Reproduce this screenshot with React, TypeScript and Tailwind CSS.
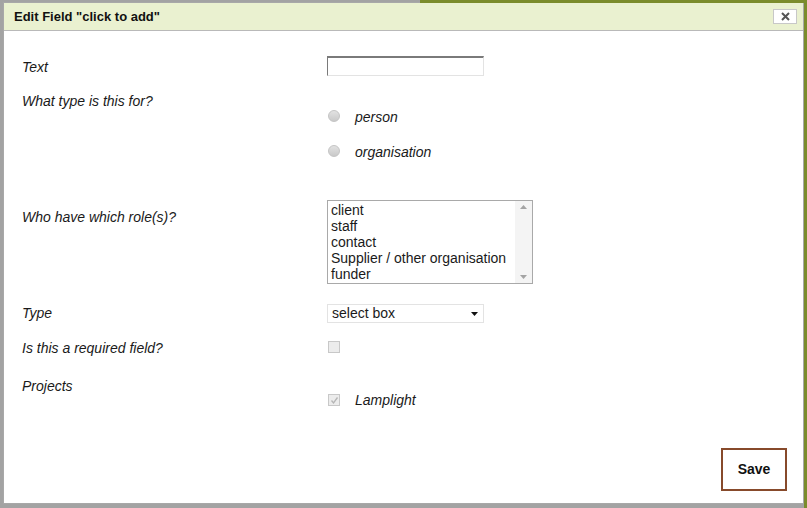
import React from "react";

const roles = ["client", "staff", "contact", "Supplier / other organisation", "funder"];

const Radio = () => (
  <span className="inline-block w-[12px] h-[12px] rounded-full border border-[#c4c4c4] bg-gradient-to-b from-[#e2e2e2] to-[#c9c9c9]" />
);

const Check = ({ checked }: { checked?: boolean }) => (
  <span className="flex items-center justify-center w-[12px] h-[12px] border border-[#c8c8c8] bg-[#ececec]">
    {checked && (
      <svg width="9" height="9" viewBox="0 0 9 9">
        <path d="M1.5 4.5 L3.5 7 L7.5 1.5" fill="none" stroke="#b5b5b5" strokeWidth="1.3" />
      </svg>
    )}
  </span>
);

export default function App() {
  return (
    <div
      className="relative w-[807px] h-[508px] bg-[#a3a3a3] overflow-hidden"
      style={{ fontFamily: '"Liberation Sans", Arial, sans-serif' }}
    >
      {/* page peeking behind the dialog */}
      <div className="absolute top-0 left-[420px] right-0 h-[3px] bg-[#7b8c2c]" />
      <div className="absolute top-0 right-0 bottom-0 w-[3px] bg-[#7b8c2c]" />

      <div className="pt-[2px] pl-[3px]">
        <div className="w-[801px] h-[502px] bg-white border border-[#a8a8a8] flex flex-col">
          {/* title bar */}
          <div className="h-[28px] shrink-0 bg-[#eaf1d0] border-b border-[#b9b9b9] flex items-center justify-between pl-[10px] pr-[6px]">
            <span className="text-[13px] font-bold text-[#111]">Edit Field "click to add"</span>
            <button className="w-[24px] h-[15px] bg-white border border-[#c8c8c8] flex items-center justify-center">
              <svg width="9" height="9" viewBox="0 0 9 9">
                <path d="M1 1 L8 8 M8 1 L1 8" stroke="#555" strokeWidth="2" />
              </svg>
            </button>
          </div>

          {/* form */}
          <div className="flex-1 flex flex-col pl-[18px] pt-[25px] text-[14px] text-[#1a1a1a]">
            <div className="flex h-[24px]">
              <div className="w-[305px] italic leading-[22px]">Text</div>
              <input className="w-[157px] h-[20px] border border-[#e3e3e3] border-t-[2px] border-t-[#7a7a7a] border-l-[#7a7a7a] outline-none" />
            </div>

            <div className="flex mt-[10px] h-[110px]">
              <div className="w-[305px] italic leading-[22px]">What type is this for?</div>
              <div className="flex flex-col pt-[18px] gap-[17px]">
                <label className="flex items-center h-[18px]">
                  <span className="ml-[1px] w-[27px]"><Radio /></span>
                  <span className="italic">person</span>
                </label>
                <label className="flex items-center h-[18px]">
                  <span className="ml-[1px] w-[27px]"><Radio /></span>
                  <span className="italic">organisation</span>
                </label>
              </div>
            </div>

            <div className="flex h-[104px]">
              <div className="w-[305px] italic leading-[22px] pt-[6px]">Who have which role(s)?</div>
              <div className="w-[206px] h-[84px] border border-[#a9a9a9] flex">
                <div className="flex-1 pl-[3px] pt-[1px] leading-[16px]">
                  {roles.map((r) => (
                    <div key={r}>{r}</div>
                  ))}
                </div>
                <div className="w-[17px] bg-[#f4f4f4] flex flex-col items-center justify-between py-[4px]">
                  <svg width="7" height="4" viewBox="0 0 7 4"><path d="M0 4 L3.5 0 L7 4Z" fill="#a3a3a3" /></svg>
                  <svg width="7" height="4" viewBox="0 0 7 4"><path d="M0 0 L3.5 4 L7 0Z" fill="#a3a3a3" /></svg>
                </div>
              </div>
            </div>

            <div className="flex h-[33px]">
              <div className="w-[305px] italic leading-[18px]">Type</div>
              <div className="w-[157px] h-[19px] border border-[#e3e3e3] flex items-center justify-between pl-[4px] pr-[5px]">
                <span>select box</span>
                <svg width="7" height="4" viewBox="0 0 7 4"><path d="M0 0 L3.5 4 L7 0Z" fill="#111" /></svg>
              </div>
            </div>

            <div className="flex h-[38px]">
              <div className="w-[305px] italic leading-[22px]">Is this a required field?</div>
              <div className="pl-[1px] pt-[4px]"><Check /></div>
            </div>

            <div className="flex h-[63px]">
              <div className="w-[305px] italic leading-[22px]">Projects</div>
              <label className="flex items-center h-[18px] mt-[16px]">
                <span className="ml-[1px] w-[27px]"><Check checked /></span>
                <span className="italic">Lamplight</span>
              </label>
            </div>

            <div className="flex justify-end pr-[16px] mt-[10px]">
              <button className="w-[66px] h-[43px] border-2 border-[#874a2b] text-[14px] font-bold text-[#111]">
                Save
              </button>
            </div>
          </div>
        </div>
      </div>
    </div>
  );
}
